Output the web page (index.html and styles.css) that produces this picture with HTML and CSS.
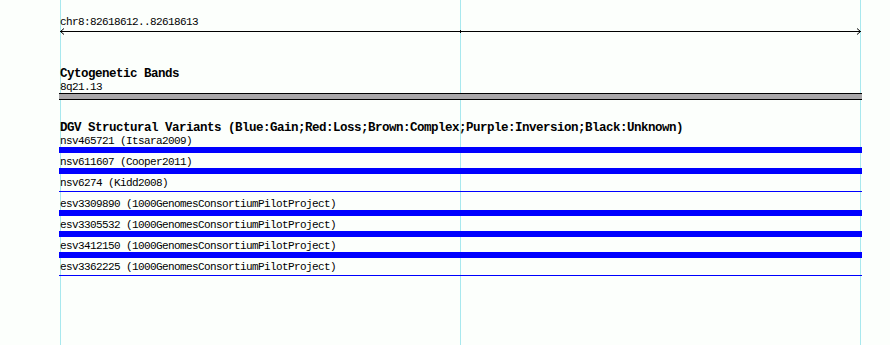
FILE: index.html
```html
<!DOCTYPE html>
<html lang="en">
<head>
    <meta charset="UTF-8">
    <title>chr8:82618612..82618613</title>
    <link rel="stylesheet" href="styles.css">
</head>
<body>
    <div class="panel">
        <!-- сетка -->
        <div class="grid-line" style="left: 60px"></div>
        <div class="grid-line" style="left: 460px"></div>
        <div class="grid-line" style="left: 860px"></div>

        <div class="track ruler">
            <div class="label tight">chr8:82618612..82618613</div>
            <svg class="arrow" width="803" height="7" viewBox="0 0 803 7">
                <line x1="1" y1="3.5" x2="802" y2="3.5" stroke="#000" stroke-width="1"/>
                <line x1="401.5" y1="2" x2="401.5" y2="5" stroke="#000" stroke-width="1"/>
                <polyline points="5,0.5 1.5,3.5 5,6.5" fill="none" stroke="#000" stroke-width="1"/>
                <polyline points="798,0.5 801.5,3.5 798,6.5" fill="none" stroke="#000" stroke-width="1"/>
            </svg>
        </div>

        <div class="track cyto">
            <div class="title">Cytogenetic Bands</div>
            <div class="label tight">8q21.13</div>
            <div class="band"></div>
        </div>

        <div class="track dgv">
            <div class="title short">DGV Structural Variants (Blue:Gain;Red:Loss;Brown:Complex;Purple:Inversion;Black:Unknown)</div>
            <div class="feature">
                <div class="label">nsv465721 (Itsara2009)</div>
                <div class="bar"></div>
            </div>
            <div class="feature">
                <div class="label">nsv611607 (Cooper2011)</div>
                <div class="bar"></div>
            </div>
            <div class="feature">
                <div class="label">nsv6274 (Kidd2008)</div>
                <div class="bar thin"></div>
            </div>
            <div class="feature">
                <div class="label">esv3309890 (1000GenomesConsortiumPilotProject)</div>
                <div class="bar"></div>
            </div>
            <div class="feature">
                <div class="label">esv3305532 (1000GenomesConsortiumPilotProject)</div>
                <div class="bar"></div>
            </div>
            <div class="feature">
                <div class="label">esv3412150 (1000GenomesConsortiumPilotProject)</div>
                <div class="bar"></div>
            </div>
            <div class="feature">
                <div class="label">esv3362225 (1000GenomesConsortiumPilotProject)</div>
                <div class="bar thin"></div>
            </div>
        </div>
    </div>
</body>
</html>
```

FILE: styles.css
```css
/* Трек-панель */
body {
    margin: 0;
    background-color: #fcfffc;
    color: #000;
    font-family: "Liberation Mono", "DejaVu Sans Mono", monospace;
}
.panel {
    position: relative;
    width: 890px;
    height: 345px;
    padding: 16px 0 0 59px;
    box-sizing: border-box;
    overflow: hidden;
}
.grid-line {
    position: absolute;
    top: 0;
    bottom: 0;
    width: 1px;
    background-color: #a8e8ee;
}
.track {
    position: relative;
    width: 803px;
}
.label {
    padding-left: 1px;
    font-size: 11px;
    letter-spacing: -0.6px;
    line-height: 13px;
    white-space: nowrap;
}
.label.tight {
    line-height: 12px;
}
.title {
    padding-left: 1px;
    font-size: 12.5px;
    font-weight: bold;
    letter-spacing: -0.5px;
    line-height: 13px;
    white-space: nowrap;
}
.title.short {
    line-height: 8px;
}
.arrow {
    display: block;
}
.cyto {
    margin-top: 33px;
}
.band {
    height: 5px;
    background-color: #a9a7a9;
    border-top: 1px solid #000;
    border-bottom: 1px solid #000;
}
.dgv {
    margin-top: 24px;
}
.feature .label {
    padding-top: 3px;
    line-height: 12px;
}
.bar {
    height: 6px;
    background-color: #0000ff;
}
.bar.thin {
    height: 1px;
    margin: 2px 0 3px;
}
```
